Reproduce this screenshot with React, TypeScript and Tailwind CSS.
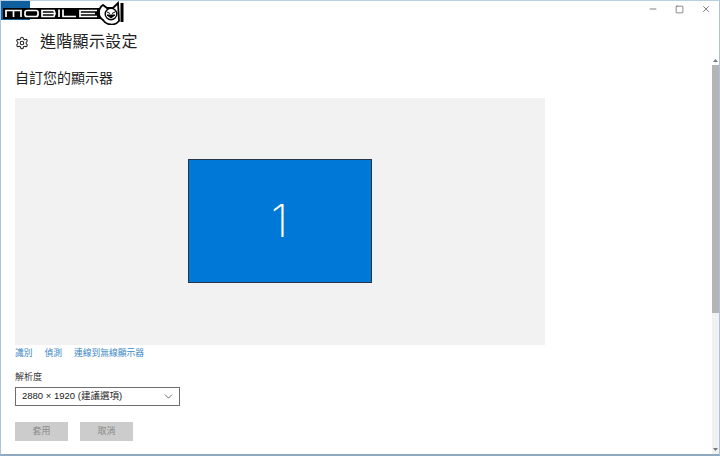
import { Settings, ChevronDown, Minus, Square, X } from "lucide-react";

const FONT = "font-['Liberation_Sans','Noto_Sans_CJK_TC',sans-serif]";

function MobileLogo() {
  return (
    <svg width="124" height="24" viewBox="0 0 124 24" className="block">
      <rect x="0" y="0" width="29" height="19" fill="#0f5f9e" />
      <rect x="2" y="7" width="98" height="11" fill="#000" />
      <g fill="none" stroke="#fff" strokeWidth="1.7">
        <path d="M5 16V9.5h7.5V16M12.5 9.5h7.5V16" />
        <rect x="24" y="9.5" width="13" height="6" rx="2" />
        <path d="M41 9.5h12l1 3-1 3H41zM41 12.5h12" />
        <path d="M58 8.5v7.5" />
        <path d="M62 8.5v7h13" />
        <path d="M96 9.5H79v6h17M79 12.5h15" />
      </g>
      <path d="M102 4l4 3h6l5-5 1 18a10 10 0 01-16-1 9 9 0 010-15z" fill="#fff" stroke="#000" strokeWidth="1.8" />
      <circle cx="110" cy="13" r="5.8" fill="none" stroke="#000" strokeWidth="1.4" />
      <path d="M106 11l3 1.5M114 11l-3 1.5M106 14h8l-4 3z" fill="#000" stroke="#000" strokeWidth="1" />
      <path d="M121 2v19" stroke="#000" strokeWidth="3" />
    </svg>
  );
}

export default function App() {
  return (
    <div className={`${FONT} relative flex h-[456px] w-[720px] flex-col overflow-hidden border-x border-b-2 border-t border-x-[#a9c4dc] border-b-[#8fa9c0] border-t-[#b9cfe2] bg-white`}>
      <div className="flex h-[24px] shrink-0 items-start justify-between">
        <MobileLogo />
        <div className="flex items-center gap-[17px] pr-[8px] pt-[3px] text-[#333]">
          <Minus size={10} strokeWidth={1.5} />
          <Square size={9} strokeWidth={1.5} />
          <X size={10} strokeWidth={1.5} />
        </div>
      </div>

      <div className="flex min-h-0 flex-1">
        <div className="w-[711px] pl-[14px]">
          <div className="flex h-[34px] items-center gap-[11px]">
            <Settings size={14} strokeWidth={1.8} className="mt-[2px] text-[#222]" />
            <h1 className="text-[16px] leading-[22px] tracking-[0.3px] text-[#222]">進階顯示設定</h1>
          </div>
          <h2 className="mt-[9px] text-[14px] leading-[20px] text-[#222]">自訂您的顯示器</h2>

          <div className="mt-[10px] flex h-[247px] w-[530px] items-center justify-center bg-[#f2f2f2]">
            <div className="mb-[2px] mr-[1px] flex h-[124px] w-[184px] items-center justify-center border border-[#26374a] bg-[#0078d7]">
              <span className="text-[45px] font-extralight leading-none text-white font-['Inter',sans-serif]">1</span>
            </div>
          </div>

          <div className="mt-[2px] flex gap-[12px] text-[8.75px] leading-[12px] text-[#3a87c8]">
            <span>識別</span>
            <span>偵測</span>
            <span>連線到無線顯示器</span>
          </div>

          <p className="mt-[12px] text-[9px] leading-[12px] text-[#333]">解析度</p>
          <div className="mt-[4px] flex h-[19px] w-[165px] items-center justify-between border border-[#6e6e6e] pl-[6px] pr-[4px] text-[9.5px] text-[#222]">
            <span>2880 × 1920 (建議選項)</span>
            <ChevronDown size={13} strokeWidth={1.2} className="text-[#222]" />
          </div>

          <div className="mt-[16px] flex gap-[12px]">
            <div className="flex h-[19px] w-[53px] items-center justify-center bg-[#cccccc] text-[9px] text-[#8a8a8a]">套用</div>
            <div className="flex h-[19px] w-[53px] items-center justify-center bg-[#cccccc] text-[9px] text-[#8a8a8a]">取消</div>
          </div>
        </div>

        {/* Scrollbar */}
        <div className="mt-[31px] flex w-[7px] flex-col items-center bg-[#f1f1f1]">
          <div className="flex h-[9px] w-full items-center justify-center bg-white">
            <svg width="5" height="3" viewBox="0 0 5 3"><path d="M0 3l2.5-3L5 3z" fill="#777" /></svg>
          </div>
          <div className="h-[248px] w-full bg-[#b5b5b5]" />
          <div className="flex-1" />
          <div className="flex h-[9px] items-center justify-center">
            <svg width="5" height="3" viewBox="0 0 5 3"><path d="M0 0l2.5 3L5 0z" fill="#777" /></svg>
          </div>
        </div>
      </div>
    </div>
  );
}
